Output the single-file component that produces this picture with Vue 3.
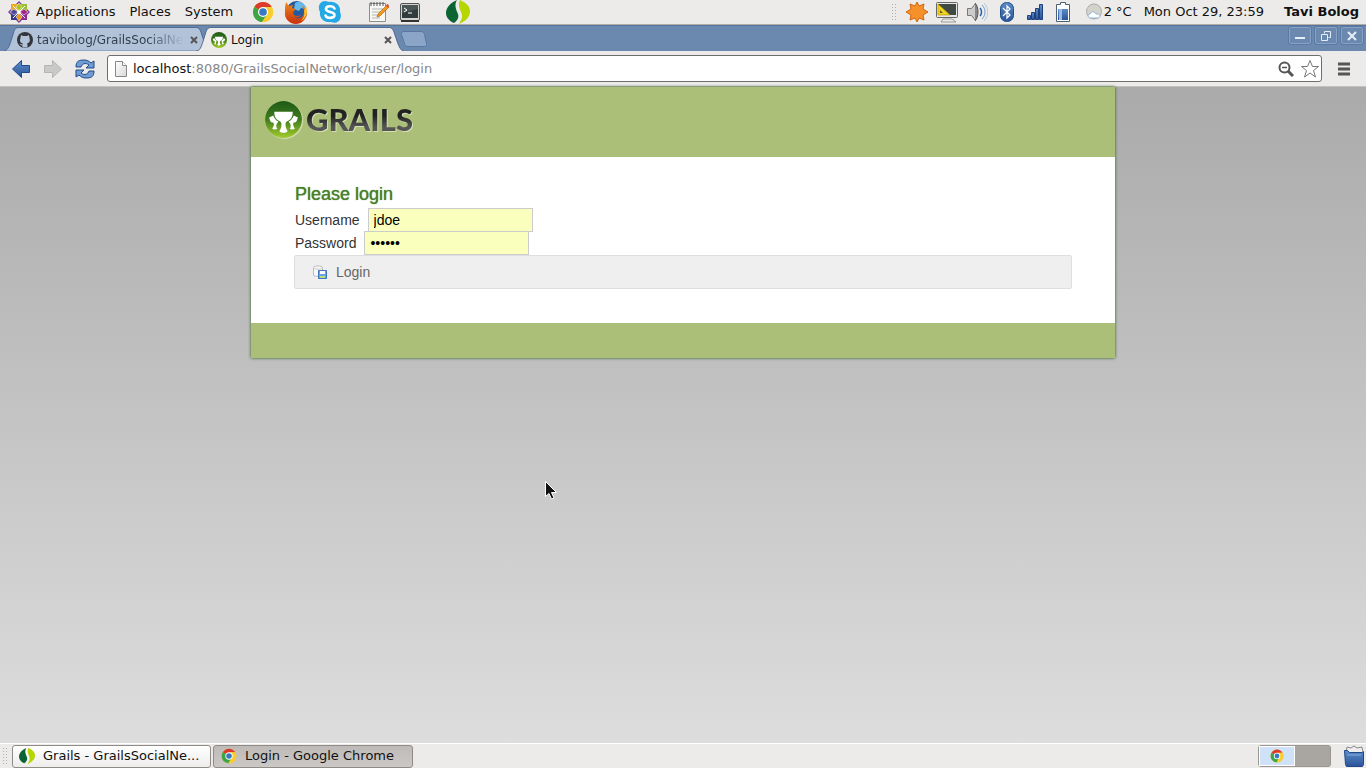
<script setup>
import { ref } from 'vue'

const username = ref('jdoe')
const password = ref('secret')
</script>

<template>
  <div class="desktop">
    <svg class="defs" aria-hidden="true">
      <defs>
        <linearGradient id="blue" x1="0" y1="0" x2="0" y2="1">
          <stop offset="0" stop-color="#5d8cc9" /><stop offset="1" stop-color="#2a549a" />
        </linearGradient>
        <linearGradient id="grailGreen" x1="0" y1="0" x2="0" y2="1">
          <stop offset="0" stop-color="#1f5a17" /><stop offset=".5" stop-color="#3f7d1d" /><stop offset="1" stop-color="#a5cc2a" />
        </linearGradient>
        <linearGradient id="fox" x1="0" y1="0" x2="0" y2="1">
          <stop offset="0" stop-color="#f08a1c" /><stop offset="1" stop-color="#c8300c" />
        </linearGradient>
        <linearGradient id="paper" x1="0" y1="0" x2="1" y2="1">
          <stop offset="0" stop-color="#ffffff" /><stop offset="1" stop-color="#d8d8d8" />
        </linearGradient>
        <symbol id="chrome" viewBox="0 0 24 24">
          <circle cx="12" cy="12" r="11" fill="#f8cd2e" />
          <path d="M12 12 2.500 6.500A11 11 0 0 1 21.500 6.500H12z" fill="#dc3a2c" />
          <path d="M2.500 6.500A11 11 0 0 0 11 23l5.500-8.500L12 12z" fill="#3da548" />
          <path d="M21.500 6.500A11 11 0 0 1 11 23l5.800-9L15 6.500z" fill="#f8cd2e" />
          <circle cx="12" cy="12" r="5.500" fill="#fff" /><circle cx="12" cy="12" r="4.200" fill="#3b78c3" />
        </symbol>
        <symbol id="leaf" viewBox="0 0 24 24">
          <path d="M11 0C4 3 0 8 0 13c0 4 3 8 8 10 4-3 5-6 4-9C10 9 8 5 11 0z" fill="#0d6433" />
          <path d="M14 0c7 3 10 7 10 11 0 6-4 10-11 13 3-5 4-8 2-12-2-5-3-8-1-12z" fill="#b5d600" />
        </symbol>
        <symbol id="grail" viewBox="0 0 36 36">
          <circle cx="18" cy="18" r="18" fill="url(#grailGreen)" />
          <path d="M9 10.500h18c0 5-2 8-5 9-2 1-2 2-2 4 0 2 1 4 2 6-2 2-6 2-8 0 1-2 2-4 2-6 0-2 0-3-2-4-3-1-5-4-5-9z" fill="#fff" />
          <path d="M4 16l4-2c1 3 3 5 5 6-1 2-2 2-2 4 0 1 0 2 1 3-1 1-4 1-5 0 2-3 2-5 1-6-3 0-3-2-4-5zM32 16l-4-2c-1 3-3 5-5 6 1 2 2 2 2 4 0 1 0 2-1 3 1 1 4 1 5 0-2-3-2-5-1-6 3 0 3-2 4-5z" fill="#fff" />
        </symbol>
      </defs>
    </svg>

    <header class="panel top">
      <nav class="menus">
        <svg class="i22" viewBox="0 0 22 22" aria-hidden="true">
          <path d="M11 0l3 3h-6zM22 11l-3 3v-6zM11 22l-3-3h6zM0 11l3-3v6z" fill="#7a3f93" />
          <path d="M3 3h7v7H3z" fill="#efa724" /><path d="M12 3h7v7h-7z" fill="#9cbd32" />
          <path d="M12 12h7v7h-7z" fill="#8e2b8f" /><path d="M3 12h7v7H3z" fill="#37398a" />
          <g stroke="#fff" stroke-width=".5">
            <path d="M11 2l3 4-3 4-3-4z" fill="#a5c52b" /><path d="M20 11l-4 3-4-3 4-3z" fill="#a32482" />
            <path d="M11 20l-3-4 3-4 3 4z" fill="#e69b1f" /><path d="M2 11l4-3 4 3-4 3z" fill="#4a4a9a" />
          </g>
          <path d="M5 5l12 12M17 5L5 17" stroke="#fff" />
        </svg>
        <button>Applications</button><button>Places</button><button>System</button>
      </nav>
      <div class="launchers">
        <button aria-label="Chrome"><svg class="i22"><use href="#chrome" /></svg></button>
        <button aria-label="Firefox">
          <svg class="i24" viewBox="0 0 24 24">
            <circle cx="12.500" cy="11" r="10" fill="#265a9e" /><path d="M11 3c5-3 10 0 11 6l-5-1-2 3-5-2z" fill="#69b9e8" />
            <path d="M2 2l3 4 4-1-1 3 4 1-3 3c0 4 4 5 8 3-2 3-5 3-7 2 5 4 11-1 10-7l-2-4c4 2 5 6 5 8-1 6-6 10-11 10C5 24 0 18 1 12c0-4 0-6 1-10z" fill="url(#fox)" />
            <path d="M22 6c2 5 1 12-5 15 3-3 4-7 3-10z" fill="#f8c02d" />
          </svg>
        </button>
        <button aria-label="Skype">
          <svg class="i24" viewBox="0 0 24 24">
            <path d="M7 1c2 0 3 1 4 1 7-1 12 4 11 10 3 6-2 13-9 10C6 23 1 18 2 12-1 7 2 1 7 1z" fill="#24a9e6" />
            <path d="M16.500 8.500C15 5.500 8 5.500 8 9c0 4 8.500 2 8.500 6 0 3.500-7.500 4-9 .5" fill="none" stroke="#fff" stroke-width="2.600" stroke-linecap="round" />
          </svg>
        </button>
        <button class="apart" aria-label="Text editor">
          <svg class="i22" viewBox="0 0 22 22">
            <path d="M2.500 2.500h16v18h-16z" fill="#f7f7f4" stroke="#8d8d89" />
            <path d="M4 1v4M7 1v4M10 1v4M13 1v4M16 1v4" stroke="#555" />
            <path d="M5 8h11M5 11h10M5 14h7M5 17h8" stroke="#b5b5b5" />
            <path d="M10 16l1-3 9-9 2 2-9 9z" fill="#f39a1d" stroke="#a65c0a" stroke-width=".6" /><path d="M19 4l2-1 1 2-1 2z" fill="#d44" />
          </svg>
        </button>
        <button aria-label="Terminal">
          <svg class="i22" viewBox="0 0 22 22">
            <rect x="1.500" y="2.500" width="19" height="17" rx="1.500" fill="#d3d3cf" stroke="#555" /><rect x="3" y="4" width="16" height="13" fill="#2f3b3c" />
            <path d="M3 4h16v4L3 12z" fill="#4a5556" /><path d="M5 7l3 2-3 2M9 12h4" fill="none" stroke="#fff" />
            <path d="M2 20h18" stroke="#333" stroke-width="2" />
          </svg>
        </button>
        <button class="apart" aria-label="Spring Tool Suite"><svg class="i24"><use href="#leaf" /></svg></button>
      </div>
      <div class="status">
        <span class="grip"></span>
        <svg class="i22" viewBox="0 0 22 22"><path d="M11 1l2 4 5-2-1 5 5 3-5 3 1 5-5-2-2 4-2-4-5 2 1-5-5-3 5-3-1-5 5 2z" fill="#f5902b" stroke="#d5660d" stroke-linejoin="round" /></svg>
        <svg class="i22" viewBox="0 0 22 22">
          <rect x=".5" y="1.500" width="21" height="15" rx="1" fill="#e8e8e5" stroke="#666" /><path d="M2 3h18v11H2z" fill="#404944" />
          <path d="M2 3l12 11H2z" fill="#f2d321" stroke="#a98a00" stroke-width=".6" /><path d="M4 9l3 3H4z" fill="#6a5f10" /><path d="M7 18h9l4 3H5z" fill="#eee" stroke="#999" />
        </svg>
        <svg class="i22" viewBox="0 0 22 22">
          <path d="M1.500 7.500h4l4-5v17l-4-5h-4z" fill="#ccc" stroke="#777" /><path d="M9 2c4 4 4 14 0 18" fill="#888" stroke="#555" />
          <path d="M14 7c2 2 2 6 0 8" fill="none" stroke="#2b62a8" stroke-width="1.500" /><path d="M16 4c4 4 4 10 0 14" fill="none" stroke="#6f9ccd" /><path d="M18 2c5 5 5 13 0 18" fill="none" stroke="#b0cbe6" />
        </svg>
        <svg class="bt" viewBox="0 0 14 20"><rect x=".5" y=".5" width="13" height="19" rx="6" fill="url(#blue)" stroke="#214c86" /><path d="M3 6l7 7-3 3V4l3 3-7 7" fill="none" stroke="#fff" stroke-width="1.200" /></svg>
        <svg class="i18" viewBox="0 0 18 18"><g fill="url(#blue)" stroke="#1e4179"><path d="M1.500 12.500h3v4h-3z" /><path d="M5.500 9.500h3v7h-3z" /><path d="M9.500 5.500h3v11h-3z" /><path d="M13.500 1.500h3v15h-3z" /></g></svg>
        <svg class="bt" viewBox="0 0 14 20"><path d="M4.500.5h5v2h4v17H.5v-17h4z" fill="#fff" stroke="#4d5f77" /><path d="M2 7h10v11H2z" fill="url(#blue)" /><path d="M3 7h3v11H3z" fill="#9dbbe2" /></svg>
        <div class="weather">
          <svg class="i18" viewBox="0 0 18 18"><circle cx="9" cy="8.500" r="7.500" fill="#d3d3ca" stroke="#aaa" /><path d="M5 15c-3-1-2-4 0-4 1-3 5-3 6 0 3-1 6 3 2 4z" fill="#fff" stroke="#8db0d8" /></svg>
          <span>2 °C</span>
        </div>
        <time>Mon Oct 29, 23:59</time><strong>Tavi Bolog</strong>
      </div>
    </header>

    <div class="tabstrip">
      <div class="tab idle">
        <svg class="shape" viewBox="0 0 204 25" preserveAspectRatio="none"><path d="M0 24.500c4 0 5-4 7-10l3-10c1-3 2-4 5-4h178c3 0 4 2 5 5l6 19" fill="#b2c3d9" stroke="#4b6890" /></svg>
        <svg class="i16" viewBox="0 0 16 16"><circle cx="8" cy="8" r="8" fill="#33363a" /><path d="M4 3l2 1h4l2-1 .5 3c1 3 0 5-2.500 5.500.5.500.5 1 .5 4h-5v-2c-2 0-2-1-3-2 1 0 1 1 3 1l.5-1C3 11 2.500 8.500 3.500 6z" fill="#b2c3d9" /></svg>
        <span class="label fade">tavibolog/GrailsSocialNe</span>
        <button class="close" aria-label="Close tab"><svg viewBox="0 0 8 8"><path d="M1 1l6 6M7 1L1 7" /></svg></button>
      </div>
      <div class="tab active">
        <svg class="shape" viewBox="0 0 208 25" preserveAspectRatio="none"><path d="M0 25c4 0 5-4 7-10l3-10c1-3 2-4.500 5-4.500h178c3 0 4 2 5 5l4 12c2 5 3 7 6 7.500z" fill="#edebea" /><path d="M0 25c4 0 5-4 7-10l3-10c1-3 2-4.500 5-4.500h178c3 0 4 2 5 5l4 12c2 5 3 7 6 7.500" fill="none" stroke="#4b6890" /></svg>
        <svg class="i16"><use href="#grail" /></svg>
        <span class="label">Login</span>
        <button class="close" aria-label="Close tab"><svg viewBox="0 0 8 8"><path d="M1 1l6 6M7 1L1 7" /></svg></button>
      </div>
      <button class="newtab" aria-label="New tab"><svg viewBox="0 0 26 16"><path d="M3 .5h17c2 0 3 1 3.500 3l2 9c0 2 0 3-2 3H7c-2 0-3-1-3.500-3l-3-9c0-2 0-3 2.500-3z" fill="#8ba5c9" stroke="#58779f" /></svg></button>
      <div class="winctl">
        <button aria-label="Minimize"><svg viewBox="0 0 12 12"><path d="M1 8h10" stroke-width="2" /></svg></button>
        <button aria-label="Restore"><svg viewBox="0 0 12 12"><path d="M4.500 3.500v-2h6v6h-2M1.500 4.500h6v6h-6z" /></svg></button>
        <button aria-label="Close"><svg viewBox="0 0 12 12"><path d="M2 2l8 8M10 2l-8 8" stroke-width="2" /></svg></button>
      </div>
    </div>

    <div class="toolbar">
      <button aria-label="Back"><svg class="i20" viewBox="0 0 20 20"><path d="M1.500 10l9-8.500v5h8v7h-8v5z" fill="url(#blue)" stroke="#204a87" stroke-linejoin="round" /></svg></button>
      <button aria-label="Forward"><svg class="i20" viewBox="0 0 20 20"><path d="M18.500 10l-9-8.500v5h-8v7h8v5z" fill="#c9c9c8" stroke="#b5b5b4" stroke-linejoin="round" /></svg></button>
      <button aria-label="Reload">
        <svg class="i20" viewBox="0 0 20 20"><g fill="#6f9cd3" stroke="#204a87" stroke-linejoin="round"><path d="M1 8c0-6 3-7 8-7 3 0 5 1 7 3l3-2v7h-8l3-3c-4-3-7-1-8 2z" /><path d="M19 12c0 6-3 7-8 7-3 0-5-1-7-3l-3 2v-7h8l-3 3c4 3 7 1 8-2z" /></g></svg>
      </button>
      <div class="omnibox">
        <svg class="doc" viewBox="0 0 12 16"><path d="M.5.5h7l4 4v11H.5z" fill="url(#paper)" stroke="#888" /><path d="M7.500.5v4h4" fill="#fff" stroke="#888" /></svg>
        <span class="url">localhost<i>:8080/GrailsSocialNetwork/user/login</i></span>
        <svg class="i16" viewBox="0 0 16 16"><circle cx="6.500" cy="6.500" r="5" fill="#fff" stroke="#555" stroke-width="2" /><path d="M10 10l5 5" stroke="#555" stroke-width="3" /><path d="M4 6.500h5" stroke="#555" stroke-width="1.500" /></svg>
        <button aria-label="Bookmark"><svg class="i20" viewBox="0 0 20 20"><path d="M10 1.500l2.500 6h6l-5 4 2 6.500-5.500-4L4.500 18l2-6.500-5-4h6z" fill="#fff" stroke="#777" stroke-linejoin="round" /></svg></button>
      </div>
      <button class="burger" aria-label="Menu"><svg viewBox="0 0 14 14"><path d="M1 2h12M1 7h12M1 12h12" stroke="#555" stroke-width="3" /></svg></button>
    </div>

    <main class="viewport">
      <div class="page">
        <header class="brand">
          <a href="#" aria-label="Grails">
            <svg class="mark" viewBox="0 0 36 36"><use href="#grail" /></svg>
            <span class="word">GRAILS</span>
          </a>
        </header>
        <form class="content" @submit.prevent>
          <h1>Please login</h1>
          <div class="field"><label for="username">Username</label><input id="username" v-model="username" type="text" /></div>
          <div class="field pass"><label for="password">Password</label><input id="password" v-model="password" type="password" /></div>
          <div class="buttons">
            <button type="submit">
              <svg class="i14" viewBox="0 0 14 14"><path d="M.5 2.500c0-2 9-2 9 0v8c-1 1-8 1-9 0z" fill="#f8f8f8" stroke="#bbb" /><path d="M.5 3c1 1.500 8 1.500 9 0" fill="none" stroke="#ccc" /><path d="M5.500 5.500h8v8h-8z" fill="#6fa0e4" stroke="#3f74c0" /><path d="M7 6h5v3H7z" fill="#fff" /><path d="M7 11h5v2H7z" fill="#b9dc84" /></svg>
              Login
            </button>
          </div>
        </form>
        <footer class="foot"></footer>
      </div>
      <svg class="cursor" viewBox="0 0 12 19"><path d="M.5.5v15l3.500-3 2.500 5.500 2.500-1-2.500-5.500h5z" fill="#111" stroke="#fff" /></svg>
    </main>

    <footer class="panel bottom">
      <span class="grip"></span>
      <button class="task"><svg class="i16"><use href="#leaf" /></svg><span>Grails - GrailsSocialNe...</span></button>
      <button class="task on"><svg class="i16"><use href="#chrome" /></svg><span>Login - Google Chrome</span></button>
      <div class="pager"><div class="cell"><svg class="i14"><use href="#chrome" /></svg></div></div>
      <button class="trash" aria-label="Trash"><svg class="i22" viewBox="0 0 22 22"><path d="M3 8l1-6 4 1 3-2 3 2 5-1 1 6z" fill="#eee" stroke="#888" /><path d="M1.500 5.500h3l2 2h13l1-1v13l-1 2h-16l-1-2z" fill="url(#blue)" stroke="#204a87" /><path d="M4 10h14" stroke="#86aadb" /></svg></button>
    </footer>
  </div>
</template>

<style>
body { margin: 0; }
</style>

<style scoped>
.desktop { display: flex; flex-direction: column; min-height: 100vh; font: 13px/18px "DejaVu Sans", sans-serif; color: #111; overflow: hidden; }
.desktop * { box-sizing: border-box; }
button { display: flex; align-items: center; border: 0; padding: 0; background: none; color: inherit; font: inherit; white-space: nowrap; }
svg { display: block; flex: none; }
.defs { position: absolute; width: 0; height: 0; }
.i14 { width: 14px; height: 14px; }
.i16 { width: 16px; height: 16px; }
.i18 { width: 18px; height: 18px; }
.i20 { width: 20px; height: 20px; }
.i22 { width: 22px; height: 22px; }
.i24 { width: 24px; height: 24px; }
.panel { display: flex; align-items: center; background: #edebea; flex: none; }
.top { height: 25px; border-bottom: 1px solid #b2aea7; padding: 0 7px 1px 8px; }
.menus { display: flex; align-items: center; gap: 14px; }
.menus svg { margin-right: -8px; }
.launchers { display: flex; align-items: center; gap: 10px; margin-left: 19px; }
.launchers .apart { margin-left: 15px; }
.status { display: flex; align-items: center; gap: 8px; margin-left: auto; white-space: nowrap; }
.bt { width: 14px; height: 20px; margin: 0 4px; }
.grip { width: 7px; height: 18px; background: radial-gradient(circle, #b5b2ae 1px, transparent 1px) 0 0 / 3px 3px; }
.weather { display: flex; align-items: center; gap: 1px; margin-left: 3px; }
time { margin-left: 4px; }
.status strong { margin-left: 12px; }

.tabstrip { display: flex; align-items: flex-end; height: 26px; padding-left: 4px; background: #6b89ae; border-top: 1px solid #56749c; flex: none; }
.tab { position: relative; display: flex; align-items: center; height: 25px; font-size: 12px; }
.tab > * { position: relative; }
.tab .shape { position: absolute; inset: 1px 0 0; width: 100%; height: 24px; }
.idle { width: 203px; padding: 2px 7px 0 13px; gap: 4px; color: #333f50; }
.active { width: 208px; padding: 2px 10px 0 15px; margin-left: -11px; gap: 4px; z-index: 1; }
.label { flex: 1; white-space: nowrap; }
.fade { mask-image: linear-gradient(to right, #000 75%, transparent); }
.close { width: 12px; height: 12px; justify-content: center; }
.close svg { width: 8px; height: 8px; stroke: #555; stroke-width: 2; }
.newtab { width: 26px; height: 16px; margin: 0 0 4px -3px; align-self: flex-end; z-index: 2; }
.newtab svg { width: 26px; height: 16px; }
.winctl { display: flex; gap: 4px; margin: 0 3px 7px auto; }
.winctl button { justify-content: center; width: 22px; height: 17px; border: 1px solid #87a2c6; border-radius: 2px; outline: 1px solid #5b7aa3; outline-offset: 0; }
.winctl svg { width: 12px; height: 12px; fill: none; stroke: #e4edf8; }

.toolbar { display: flex; align-items: center; gap: 12px; height: 36px; padding: 0 15px 0 11px; background: #edebea; border-bottom: 1px solid #c4c2c0; flex: none; }
.omnibox { display: flex; flex: 1; align-items: center; height: 27px; padding: 0 1px 0 7px; margin-right: 3px; gap: 6px; background: #fff; border: 1px solid #6e6e6e; border-radius: 3px; }
.doc { width: 12px; height: 16px; }
.url { flex: 1; }
.url i { font-style: normal; color: #888; }
.burger svg { width: 14px; height: 14px; }

.viewport { position: relative; flex: 1; background: linear-gradient(#aaa, #ddd); font-family: "Liberation Sans", Arial, sans-serif; font-size: 14px; color: #333; }
.page { max-width: 864px; margin: 0 auto; background: #fff; box-shadow: 0 0 3px #255b17; }
.brand { background: #abbf78; height: 70px; padding: 14px; }
.brand a { display: flex; align-items: center; gap: 4px; text-decoration: none; }
.mark { width: 37px; height: 37px; border-radius: 50%; box-shadow: 1px 1px 1px #d4e0b4; }
.word { font: 900 31px/37px Lato, "Open Sans", sans-serif; color: transparent; background: linear-gradient(#222 40%, #555 70%); background-clip: text; filter: drop-shadow(1px 1px 0 #d4e0b4); }
.content { padding: 26px 43px 34px; }
h1 { margin: 0 1px 3px; font-size: 18px; line-height: 22px; font-weight: 400; color: #48802c; text-shadow: 0 0 1px #48802c; }
.field { display: flex; align-items: center; gap: 8px; height: 23px; padding-left: 1px; }
.field input { width: 165px; height: 24px; margin: 0; padding: 0 5px; border: 1px solid #ccc; border-radius: 0; background: #faffbd; color: #000; font: inherit; }
.pass { height: 24px; }
.buttons { height: 34px; padding: 0 18px; display: flex; align-items: center; background: #efefef; border: 1px solid #dfdfdf; border-radius: 2px; }
.buttons button { gap: 9px; color: #666; }
.foot { height: 35px; background: #abbf78; }
.cursor { position: absolute; left: 40%; top: 394px; width: 12px; height: 19px; margin-left: -1px; }

.bottom { height: 25px; border-top: 1px solid #fff; gap: 2px; padding: 0 1px 0 2px; }
.bottom .grip { margin-right: 1px; }
.task { width: 199px; height: 23px; gap: 8px; padding: 0 6px; border: 1px solid #8f8c88; border-radius: 3px; background: linear-gradient(#fff, #eeedec); }
.task.on { width: 200px; padding: 0 7px; background: linear-gradient(#bdbab7, #cbc8c5); }
.pager { width: 73px; height: 22px; margin: 0 10px 0 auto; border: 1px solid #9b9691; border-radius: 3px; background: #a9a6a2; }
.cell { display: flex; align-items: center; justify-content: center; width: 36px; height: 20px; background: #d0e2f7; border: 1px solid #fff; }
</style>
